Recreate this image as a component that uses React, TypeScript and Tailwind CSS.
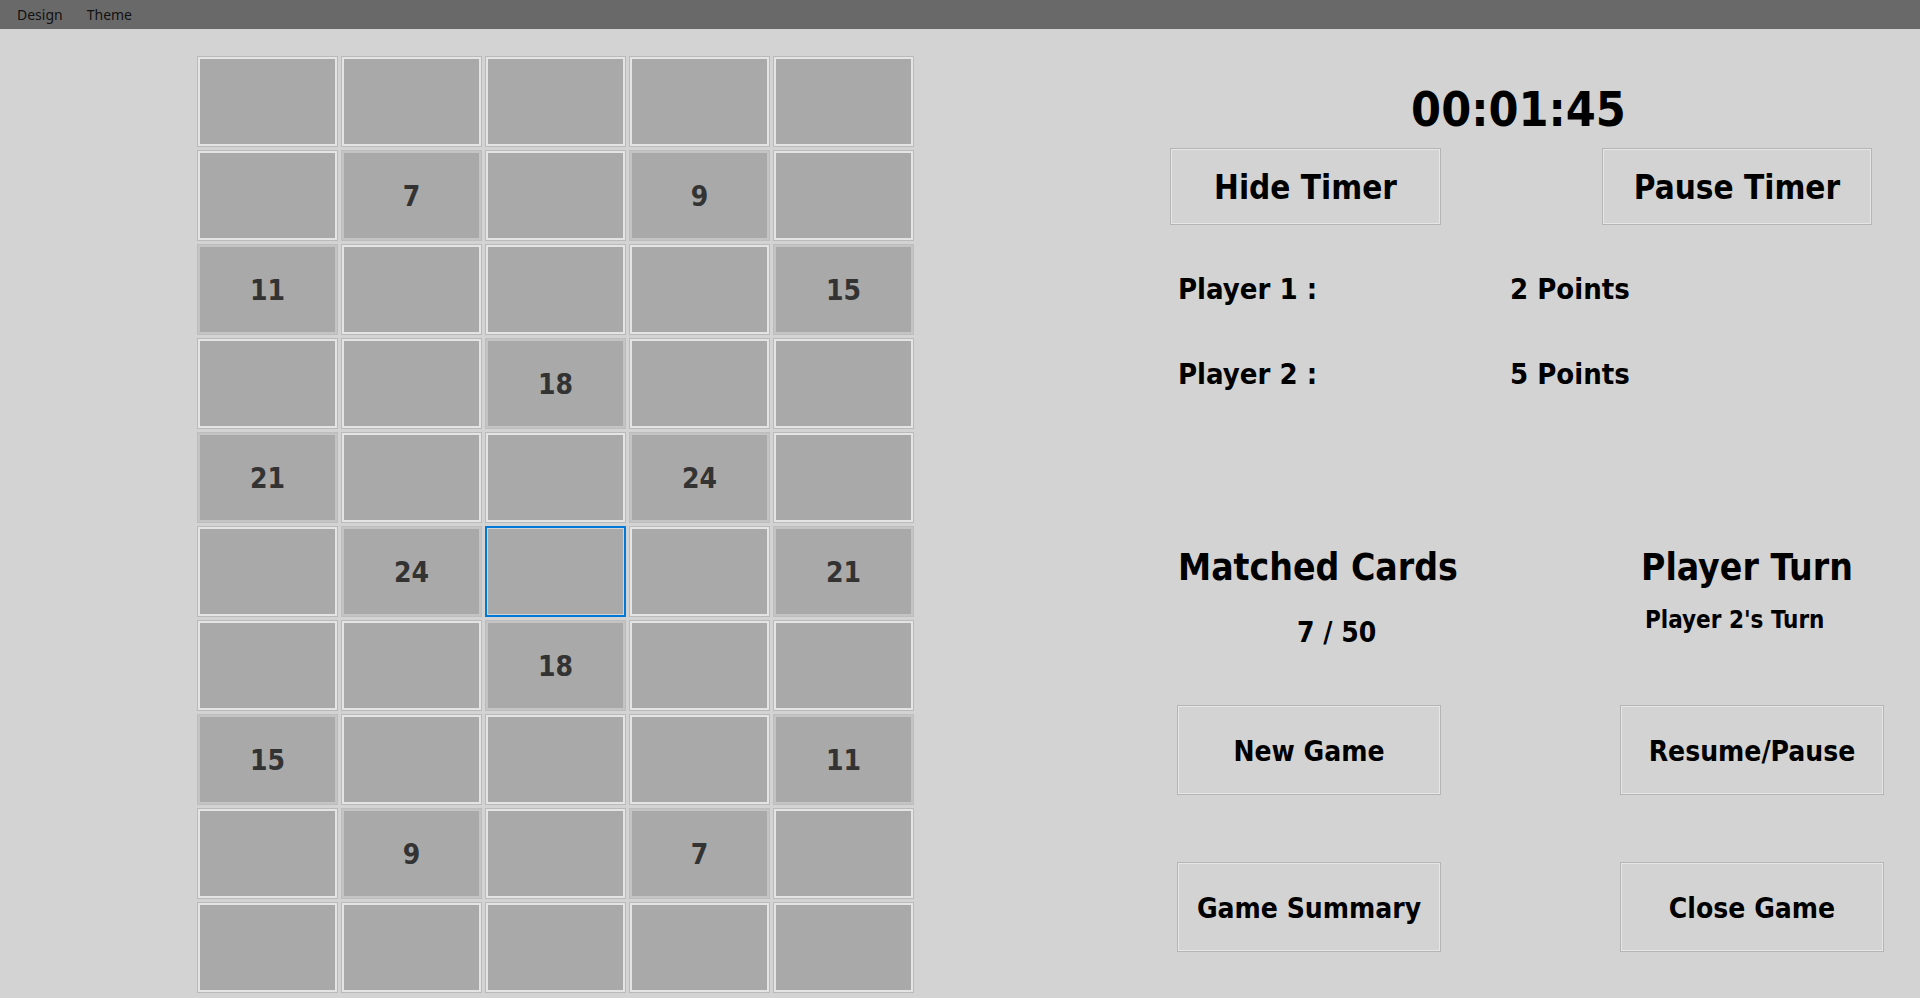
import React from 'react';

const font = "font-['DejaVu_Sans_Condensed','DejaVu_Sans',sans-serif] [font-stretch:condensed] font-bold";

// 0 = blank, -1 = selected blank, other = revealed number
const board: number[][] = [
  [0, 0, 0, 0, 0],
  [0, 7, 0, 9, 0],
  [11, 0, 0, 0, 15],
  [0, 0, 18, 0, 0],
  [21, 0, 0, 24, 0],
  [0, 24, -1, 0, 21],
  [0, 0, 18, 0, 0],
  [15, 0, 0, 0, 11],
  [0, 9, 0, 7, 0],
  [0, 0, 0, 0, 0],
];

const Cell: React.FC<{ value: number }> = ({ value }) => {
  if (value === -1) {
    return <div className="border-2 border-[#0078d7] bg-[#a9a9a9] shadow-[inset_0_0_0_1px_#d4d4d4]" />;
  }
  if (value === 0) {
    return <div className="border border-[#bababa] bg-[#a9a9a9] shadow-[inset_0_0_0_2px_#e4e4e4]" />;
  }
  return (
    <div className={`flex items-center justify-center border border-[#bdbdbd] bg-[#a9a9a9] pt-[2px] shadow-[inset_0_0_0_2px_#c4c4c4] text-[28px] leading-none text-[#333333] ${font}`}>
      {value}
    </div>
  );
};

const WinButton: React.FC<{ label: string; className: string }> = ({ label, className }) => (
  <button
    className={`flex items-center justify-center border border-[#b5b5b5] bg-[#d3d3d3] shadow-[inset_0_0_0_1px_#e6e6e6] leading-none text-black ${font} ${className}`}
  >
    {label}
  </button>
);

const App: React.FC = () => {
  return (
    <div className="h-[998px] w-[1920px] overflow-hidden bg-[#d3d3d3]">
      <div className="flex h-[29px] items-center bg-[#696969] pb-px font-['Noto_Sans',sans-serif] text-[14px] text-[#111111]">
        <span className="ml-[17px]">Design</span>
        <span className="ml-[24px]">Theme</span>
      </div>

      <div className="flex">
        <div className="ml-[197px] mt-[27px] grid grid-cols-[repeat(5,141px)] grid-rows-[repeat(10,91px)] gap-[3px]">
          {board.flat().map((v, i) => (
            <Cell key={i} value={v} />
          ))}
        </div>

        <div className="ml-[256px] flex w-[714px] flex-col">
          <div className={`mt-[56px] w-[697px] text-center text-[48px] leading-none text-black ${font}`}>00:01:45</div>

          <div className="mt-[15px] flex gap-[161px]">
            <WinButton label="Hide Timer" className="h-[77px] w-[271px] pt-[2px] text-[33px]" />
            <WinButton label="Pause Timer" className="h-[77px] w-[270px] pt-[2px] text-[33px]" />
          </div>

          <div className={`mt-[50px] flex pl-[8px] text-[29px] leading-none text-black ${font}`}>
            <span className="w-[332px]">Player 1 :</span>
            <span>2 Points</span>
          </div>
          <div className={`mt-[56px] flex pl-[8px] text-[29px] leading-none text-black ${font}`}>
            <span className="w-[332px]">Player 2 :</span>
            <span>5 Points</span>
          </div>

          <div className={`mt-[160px] flex text-black ${font}`}>
            <div className="w-[471px] pl-[8px]">
              <div className="text-[37px] leading-none">Matched Cards</div>
              <div className="mt-[33px] pl-[119px] text-[28px] leading-none">7 / 50</div>
            </div>
            <div>
              <div className="text-[37px] leading-none">Player Turn</div>
              <div className="mt-[22px] pl-[4px] text-[24px] leading-none">Player 2's Turn</div>
            </div>
          </div>

          <div className="mt-[58px] grid grid-cols-[264px_264px] gap-x-[179px] gap-y-[67px] pl-[7px]">
            <WinButton label="New Game" className="h-[90px] pt-[3px] text-[28px]" />
            <WinButton label="Resume/Pause" className="h-[90px] pt-[3px] text-[28px]" />
            <WinButton label="Game Summary" className="h-[90px] pt-[3px] text-[28px]" />
            <WinButton label="Close Game" className="h-[90px] pt-[3px] text-[28px]" />
          </div>
        </div>
      </div>
    </div>
  );
};

export default App;
